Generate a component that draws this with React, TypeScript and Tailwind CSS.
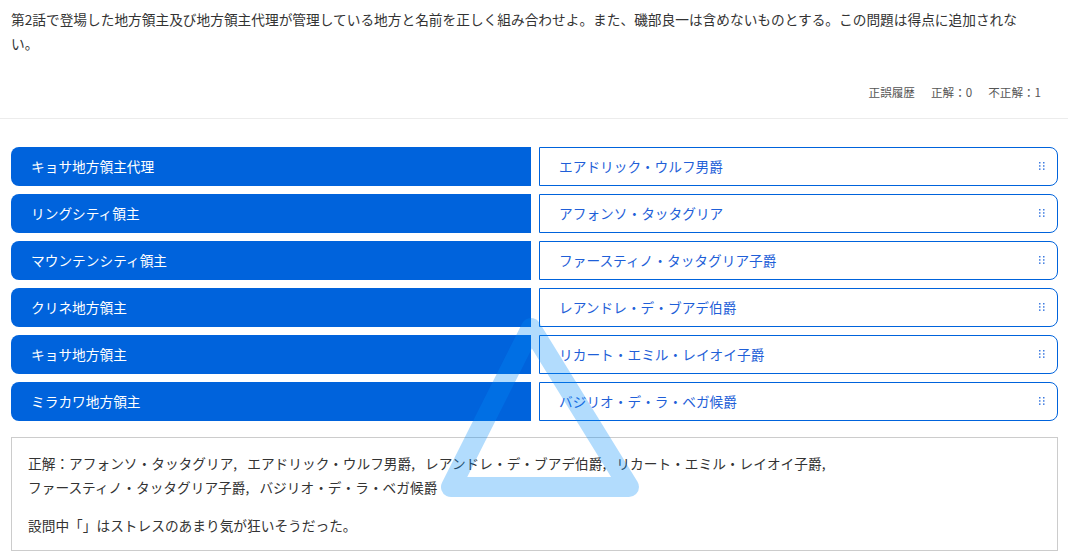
import React from "react";

const font = { fontFamily: '"Noto Sans CJK JP", "Noto Sans", sans-serif' };

const rows: [string, string][] = [
  ["キョサ地方領主代理", "エアドリック・ウルフ男爵"],
  ["リングシティ領主", "アフォンソ・タッタグリア"],
  ["マウンテンシティ領主", "ファースティノ・タッタグリア子爵"],
  ["クリネ地方領主", "レアンドレ・デ・ブアデ伯爵"],
  ["キョサ地方領主", "リカート・エミル・レイオイ子爵"],
  ["ミラカワ地方領主", "バジリオ・デ・ラ・ベガ候爵"],
];

const answers = [
  "アフォンソ・タッタグリア",
  "エアドリック・ウルフ男爵",
  "レアンドレ・デ・ブアデ伯爵",
  "リカート・エミル・レイオイ子爵",
  "ファースティノ・タッタグリア子爵",
  "バジリオ・デ・ラ・ベガ候爵",
];

function Handle() {
  return (
    <svg width="6" height="9" viewBox="0 0 6 9" className="shrink-0">
      {[0, 1].map((c) =>
        [0, 1, 2].map((r) => (
          <rect key={`${c}-${r}`} x={c * 4} y={r * 3.2} width="1.5" height="1.5" fill="#3d7be0" />
        ))
      )}
    </svg>
  );
}

export default function App() {
  return (
    <div className="relative w-full min-h-[560px] bg-white text-[#333]" style={font}>
      <div className="pl-[11px] pr-[10px]">
        <p className="pt-[7px] text-[13.7px] leading-[24px] w-[1025px]">
          第2話で登場した地方領主及び地方領主代理が管理している地方と名前を正しく組み合わせよ。また、磯部良一は含めないものとする。この問題は得点に追加されない。
        </p>
        <div className="mt-[28px] pb-[17px] flex justify-end gap-[16px] pr-[17px] text-[11.6px] leading-[18px] text-[#555]">
          <span>正誤履歴</span>
          <span>正解：0</span>
          <span>不正解：1</span>
        </div>
      </div>
      <div className="border-t border-[#ececec]" />
      <div className="pl-[11px] pr-[10px] pt-[28px]">
        <div className="flex flex-col gap-[8px]">
          {rows.map(([l, r]) => (
            <div key={l} className="grid grid-cols-[520px_1fr] gap-x-[8px]">
              <div className="h-[39px] flex items-center pl-[20px] bg-[#0063dc] text-white rounded-l-[8px] text-[13.7px]">
                {l}
              </div>
              <div className="h-[39px] flex items-center justify-between pl-[19px] pr-[12px] border border-[#0063dc] rounded-r-[8px] text-[#1f5fd8] text-[13.7px] bg-white">
                <span>{r}</span>
                <Handle />
              </div>
            </div>
          ))}
        </div>
        <div className="mt-[16px] border border-[#cccccc] px-[16px] py-[13px] text-[13.7px] leading-[24px] text-[#333]">
          <p>
            正解：
            {answers.map((a, i) => (
              <span key={a} className={i < answers.length - 1 ? "inline-block pr-[7px]" : "inline-block"}>
                {a}
                {i < answers.length - 1 ? ",\u00a0" : ""}
              </span>
            ))}
          </p>
          <p className="mt-[14px]">設問中「」はストレスのあまり気が狂いそうだった。</p>
        </div>
      </div>
      <svg
        className="absolute left-0 top-0 pointer-events-none"
        width="1068"
        height="560"
        viewBox="0 0 1068 560"
      >
        <polygon
          points="531,328 451,487 629,487"
          fill="none"
          stroke="rgba(0,140,250,0.3)"
          strokeWidth="20"
          strokeLinejoin="round"
        />
      </svg>
    </div>
  );
}
